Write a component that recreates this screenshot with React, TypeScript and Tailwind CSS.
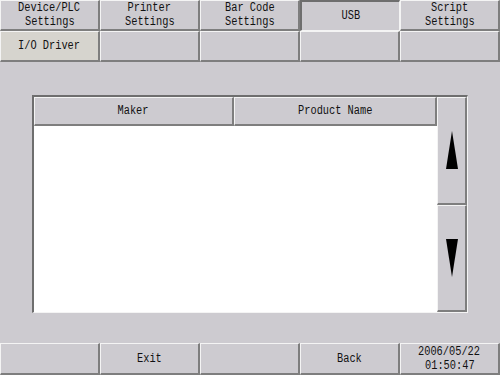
import React from 'react';

const raised =
  'border-t border-l border-r-2 border-b-2 border-t-[#f4f4f4] border-l-[#f4f4f4] border-r-[#7e7e7e] border-b-[#7e7e7e]';
const sunken =
  'border-t-2 border-l-2 border-r border-b border-t-[#6e6e6e] border-l-[#6e6e6e] border-r-[#f4f4f4] border-b-[#f4f4f4]';

// the panel font is a tall, narrow bitmap face: squeeze a mono font sideways
function Txt({ children }: { children: React.ReactNode }) {
  return <span className="block leading-[14px] whitespace-pre scale-x-[0.86]">{children}</span>;
}

function Btn({ label, active, tint }: { label?: string; active?: boolean; tint?: boolean }) {
  const lines = label ? label.split('\n') : [];
  return (
    <div
      className={`flex flex-col items-center justify-center text-center ${active ? sunken : raised} ${
        tint ? 'bg-[#d6d4ce]' : 'bg-[#cdcbd0]'
      }`}
    >
      {lines.map((l) => (
        <Txt key={l}>{l}</Txt>
      ))}
    </div>
  );
}

function Arrow({ down }: { down?: boolean }) {
  return (
    <svg width="12" height="38" viewBox="0 0 12 38">
      {down ? <polygon points="0,0 12,0 6,38" fill="#000" /> : <polygon points="6,0 12,38 0,38" fill="#000" />}
    </svg>
  );
}

export default function App() {
  return (
    <div className="w-[500px] h-[375px] bg-[#cdcbd0] flex flex-col text-[#111] text-[12px] font-['Liberation_Mono',monospace]">
      <div className="grid grid-cols-5 grid-rows-2 h-[62px]">
        <Btn label={'Device/PLC\nSettings'} />
        <Btn label={'Printer\nSettings'} />
        <Btn label={'Bar Code\nSettings'} />
        <Btn label="USB" active />
        <Btn label={'Script\nSettings'} />
        <Btn label="I/O Driver" tint />
        <Btn />
        <Btn />
        <Btn />
        <Btn />
      </div>

      <div className="flex-1 pl-[32px] pt-[33px]">
        <div className={`w-[436px] h-[218px] flex ${sunken}`}>
          <div className="flex flex-col w-[403px]">
            <div className="flex h-[29px]">
              <div className={`w-[200px] flex items-center justify-center ${raised}`}>
                <Txt>Maker</Txt>
              </div>
              <div className={`flex-1 flex items-center justify-center ${raised}`}>
                <Txt>Product Name</Txt>
              </div>
            </div>
            <div className="flex-1 bg-white" />
          </div>
          <div className="flex-1 flex flex-col">
            <div className={`flex-1 flex items-start justify-center pt-[33px] ${raised}`}>
              <Arrow />
            </div>
            <div className={`flex-1 flex items-start justify-center pt-[33px] ${raised}`}>
              <Arrow down />
            </div>
          </div>
        </div>
      </div>

      <div className="grid grid-cols-5 h-[32px]">
        <Btn />
        <Btn label="Exit" />
        <Btn />
        <Btn label="Back" />
        <Btn label={'2006/05/22\n01:50:47'} />
      </div>
    </div>
  );
}
